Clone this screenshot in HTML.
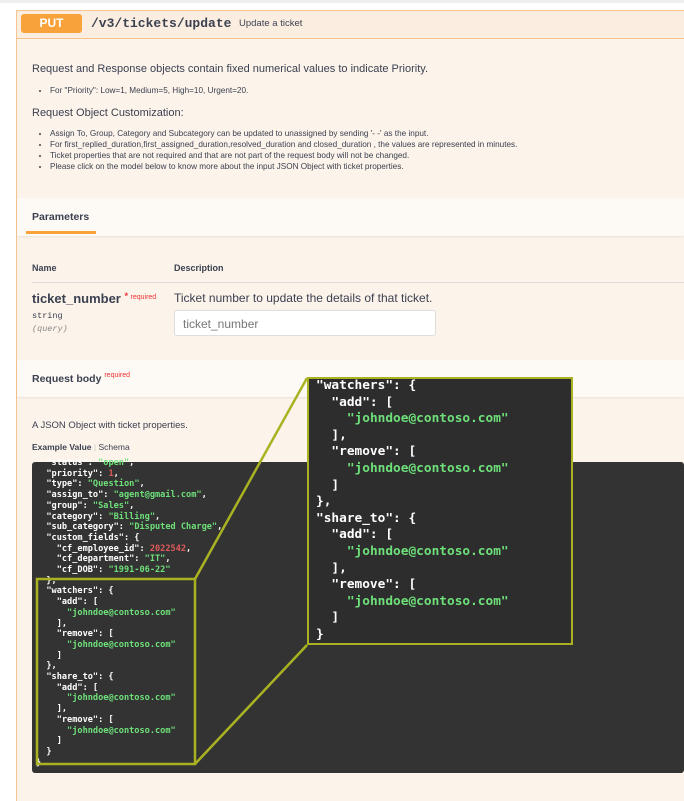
<!DOCTYPE html><html><head><style>
body{margin:0;width:684px;height:800px;background:#fff;position:relative;overflow:hidden;font-family:"Liberation Sans",sans-serif;color:#3b4151}
.abs{position:absolute}
.mono{font-family:"Liberation Mono",monospace;font-weight:bold}
ul{margin:0;padding-left:26px}
.code{white-space:pre;color:#fff;font-family:"DejaVu Sans Mono","Liberation Mono",monospace;font-weight:bold}
.g{color:#6ee07a}.r{color:#e05a5a}
</style></head><body>
<div class="abs" style="left:0;top:0;width:684px;height:3px;background:#eee"></div>
<div class="abs" style="left:16px;top:10px;width:670px;height:790px;background:#fcf3ea;border-left:1.5px solid #f6c58f;border-top:1.5px solid #f6c58f"></div>
<div class="abs" style="left:17px;top:11px;width:667px;height:27px;background:#fbeee0;border-bottom:1px solid #f5c28a"></div>
<div class="abs" style="left:21px;top:14px;width:61px;height:19px;background:#f7a23a;border-radius:3px;color:#fff;font-weight:bold;font-size:12px;text-align:center;line-height:19px">PUT</div>
<div class="abs mono" style="left:91px;top:16px;font-size:13px;color:#3b4151">/v3/tickets/update</div>
<div class="abs" style="left:239px;top:18px;font-size:9.5px">Update a ticket</div>
<div class="abs" style="left:32px;top:63px;font-size:11px">Request and Response objects contain fixed numerical values to indicate Priority.</div>
<ul class="abs" style="left:24px;top:86px;font-size:8.2px"><li>For "Priority": Low=1, Medium=5, High=10, Urgent=20.</li></ul>
<div class="abs" style="left:32px;top:107px;font-size:11px">Request Object Customization:</div>
<ul class="abs" style="left:24px;top:128px;font-size:8.2px;line-height:11px"><li>Assign To, Group, Category and Subcategory can be updated to unassigned by sending '- -' as the input.</li><li>For first_replied_duration,first_assigned_duration,resolved_duration and closed_duration , the values are represented in minutes.</li><li>Ticket properties that are not required and that are not part of the request body will not be changed.</li><li>Please click on the model below to know more about the input JSON Object with ticket properties.</li></ul>
<div class="abs" style="left:17px;top:198px;width:667px;height:38px;background:#fdf9f5;box-shadow:0 1px 2px rgba(0,0,0,.08)"></div>
<div class="abs" style="left:32px;top:211px;font-size:10.5px;font-weight:bold">Parameters</div>
<div class="abs" style="left:26px;top:231px;width:70px;height:3px;background:#f7a23a"></div>
<div class="abs" style="left:32px;top:263px;font-size:9px;font-weight:bold">Name</div>
<div class="abs" style="left:174px;top:263px;font-size:9px;font-weight:bold">Description</div>
<div class="abs" style="left:32px;top:282px;width:652px;height:1px;background:#ddd"></div>
<div class="abs" style="left:32px;top:291px;font-size:13px;font-weight:bold">ticket_number <span style="color:#e33;font-size:9px;vertical-align:4px">* <span style="font-size:7px;font-weight:normal">required</span></span></div>
<div class="abs mono" style="left:32px;top:311px;font-size:8.5px;font-weight:normal">string</div>
<div class="abs mono" style="left:32px;top:324px;font-size:8.5px;font-weight:normal;font-style:italic;color:#888">(query)</div>
<div class="abs" style="left:174px;top:291px;font-size:12px">Ticket number to update the details of that ticket.</div>
<div class="abs" style="left:174px;top:310px;width:262px;height:26px;background:#fff;border:1px solid #ddd;border-radius:3px;font-size:12px;color:#777;line-height:26px;padding-left:8px;box-sizing:border-box">ticket_number</div>
<div class="abs" style="left:17px;top:360px;width:667px;height:37px;background:#fdf9f5;box-shadow:0 1px 2px rgba(0,0,0,.08)"></div>
<div class="abs" style="left:32px;top:372px;font-size:10.5px;font-weight:bold">Request body <span style="color:#e33;font-size:7px;font-weight:normal;vertical-align:5px">required</span></div>
<div class="abs" style="left:32px;top:420px;font-size:9.5px">A JSON Object with ticket properties.</div>
<div class="abs" style="left:32px;top:442px;font-size:8.5px;font-weight:bold">Example Value <span style="color:#ccc;font-weight:normal">|</span> <span style="font-weight:normal">Schema</span></div>
<div class="abs" style="left:32px;top:462px;width:652px;height:311px;background:#333;border-radius:3px"></div>
<div class="abs code" style="left:36px;top:458px;font-size:8.6px;line-height:10.7px">  "status": <span class="g">"open"</span>,
  "priority": <span class="r">1</span>,
  "type": <span class="g">"Question"</span>,
  "assign_to": <span class="g">"agent@gmail.com"</span>,
  "group": <span class="g">"Sales"</span>,
  "category": <span class="g">"Billing"</span>,
  "sub_category": <span class="g">"Disputed Charge"</span>,
  "custom_fields": {
    "cf_employee_id": <span class="r">2022542</span>,
    "cf_department": <span class="g">"IT"</span>,
    "cf_DOB": <span class="g">"1991-06-22"</span>
  },
  "watchers": {
    "add": [
      <span class="g">"johndoe@contoso.com"</span>
    ],
    "remove": [
      <span class="g">"johndoe@contoso.com"</span>
    ]
  },
  "share_to": {
    "add": [
      <span class="g">"johndoe@contoso.com"</span>
    ],
    "remove": [
      <span class="g">"johndoe@contoso.com"</span>
    ]
  }
}</div>
<svg class="abs" style="left:0;top:0" width="684" height="800"><g stroke="#a9b322" stroke-width="2.5" fill="none"><line x1="195" y1="579" x2="307" y2="378"/><line x1="195" y1="764" x2="307" y2="645"/><rect x="37" y="579" width="158" height="185"/></g></svg>
<div class="abs" style="left:307px;top:377px;width:266px;height:268px;background:#2d2d2d;border:2.5px solid #a9b322;box-sizing:border-box"></div>
<div class="abs code" style="left:316px;top:378px;font-size:12.8px;line-height:16.6px">"watchers": {
  "add": [
    <span class="g">"johndoe@contoso.com"</span>
  ],
  "remove": [
    <span class="g">"johndoe@contoso.com"</span>
  ]
},
"share_to": {
  "add": [
    <span class="g">"johndoe@contoso.com"</span>
  ],
  "remove": [
    <span class="g">"johndoe@contoso.com"</span>
  ]
}</div>
</body></html>
